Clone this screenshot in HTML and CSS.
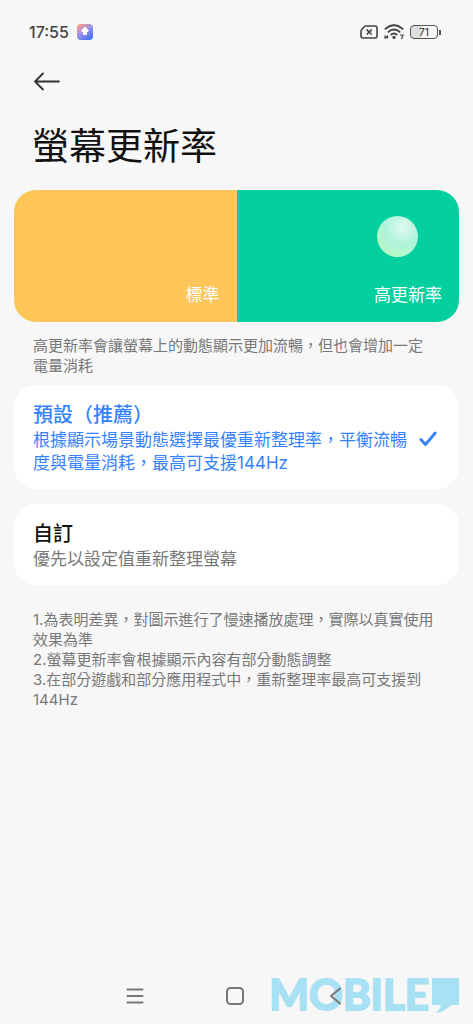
FILE: index.html
```html
<!DOCTYPE html>
<html lang="zh-Hant">
<head>
<meta charset="utf-8">
<meta name="viewport" content="width=device-width, initial-scale=1">
<title>螢幕更新率</title>
<link rel="stylesheet" href="styles.css">
</head>
<body>
<div class="screen">
  <header class="status">
    <div class="status-group">
      <time>17:55</time>
      <svg class="app-icon" width="16" height="16" viewBox="0 0 16 16" aria-hidden="true">
        <defs>
          <linearGradient id="app" x1="0.1" y1="0" x2="0.8" y2="1">
            <stop offset="0" stop-color="#ff9a76"/>
            <stop offset="0.45" stop-color="#a493e8"/>
            <stop offset="1" stop-color="#3f6dfa"/>
          </linearGradient>
        </defs>
        <rect width="16" height="16" rx="4" fill="url(#app)"/>
        <path d="M8 3 11.500 6.500 9.500 8.500V10.500H6.500V8.500L4.500 6.500Z" fill="#fff" stroke="#fff" stroke-linejoin="round" stroke-width="1"/>
      </svg>
    </div>
    <div class="status-group status-right">
      <svg width="18" height="14" viewBox="0 0 18 14" fill="none" stroke="#444" stroke-width="1.6" aria-hidden="true">
        <path d="M5.6 1H15a2 2 0 0 1 2 2v8a2 2 0 0 1-2 2H3a2 2 0 0 1-2-2V6.2Q1 5.4 1.6 4.8L4.4 1.6Q4.9 1 5.6 1Z"/>
        <path d="m6.7 4.7 5 4.8m0-4.8-5 4.8" stroke-width="1.7"/>
      </svg>
      <svg width="20" height="16" viewBox="0 0 20 16" fill="none" stroke="#444" stroke-width="1.8" aria-hidden="true">
        <path d="M.8 5.4Q10-2.800 19.200 5.400M3.800 8.300Q10 2.800 16.200 8.300M6.700 11Q10 8 13.300 11"/>
        <circle cx="10" cy="13.300" r="1.600" fill="#444" stroke="none"/>
        <path d="M1 14.500V11.500M3.500 11.500v3M1 14.500l3-3M16 11h3l-1.500 4" stroke-width="1.200"/>
      </svg>
      <span class="battery"><span class="battery-body">71</span></span>
    </div>
  </header>

  <div class="toolbar">
    <button class="icon-button" type="button" aria-label="返回">
      <svg width="28" height="20" viewBox="0 0 28 20" fill="none" stroke="#333" stroke-width="1.800" stroke-linecap="round" stroke-linejoin="round" aria-hidden="true">
        <path d="M26 10.500H2M10 2.500 2 10.500l8 8"/>
      </svg>
    </button>
  </div>

  <main>
    <h1 class="title">螢幕更新率</h1>
    <section class="demo">
      <div class="demo-half demo-standard"><span>標準</span></div>
      <div class="demo-half demo-high"><i class="ball"></i><span>高更新率</span></div>
    </section>
    <p class="note">高更新率會讓螢幕上的動態顯示更加流暢，但也會增加一定電量消耗</p>

    <form class="options">
      <label class="option">
        <input class="option-input" type="radio" name="rate" checked>
        <span class="option-text">
          <span class="option-title">預設（推薦）</span>
          <span class="option-desc">根據顯示場景動態選擇最優重新整理率，平衡流暢度與電量消耗，最高可支援144Hz</span>
        </span>
        <svg class="check" width="18" height="16" viewBox="0 0 18 16" fill="none" stroke="currentColor" stroke-width="2.800" stroke-linecap="round" stroke-linejoin="round" aria-hidden="true">
          <path d="m1.800 8.500 4.700 5L16.200 2"/>
        </svg>
      </label>
      <label class="option">
        <input class="option-input" type="radio" name="rate">
        <span class="option-text">
          <span class="option-title">自訂</span>
          <span class="option-desc">優先以設定值重新整理螢幕</span>
        </span>
      </label>
    </form>

    <div class="note footnotes">
      <p>1.為表明差異，對圖示進行了慢速播放處理，實際以真實使用效果為準</p>
      <p>2.螢幕更新率會根據顯示內容有部分動態調整</p>
      <p>3.在部分遊戲和部分應用程式中，重新整理率最高可支援到144Hz</p>
    </div>
  </main>

  <nav class="nav">
    <div class="watermark">
      <span>MOBILE</span>
      <svg width="27" height="35" viewBox="0 0 27 35" fill="#a8e0f4" aria-hidden="true">
        <path d="M0 0h27v27h-8Q13 34 3 35 8 32 9 27H0Z"/>
      </svg>
    </div>
    <button class="icon-button" type="button" aria-label="最近">
      <svg width="20" height="20" viewBox="0 0 20 20" fill="none" stroke="#777" stroke-width="2" stroke-linecap="round" aria-hidden="true"><path d="M2.500 3.500h15M2.500 10h15M2.500 16.500h15"/></svg>
    </button>
    <button class="icon-button" type="button" aria-label="主畫面">
      <svg width="20" height="20" viewBox="0 0 20 20" fill="none" stroke="#777" stroke-width="2" aria-hidden="true"><rect x="2" y="2" width="16" height="16" rx="3.500"/></svg>
    </button>
    <button class="icon-button" type="button" aria-label="返回上一頁">
      <svg width="20" height="20" viewBox="0 0 20 20" fill="none" stroke="#777" stroke-width="2" stroke-linecap="round" stroke-linejoin="round" aria-hidden="true"><path d="M15 2.500 6 10l9 7.500"/></svg>
    </button>
  </nav>
</div>
</body>
</html>
```
FILE: styles.css
```css
* {
  box-sizing: border-box;
}

body {
  margin: 0;
  background: #f7f7f7;
  color: #111;
  font-family: Inter, "Noto Sans CJK TC", sans-serif;
}

h1,
p {
  margin: 0;
}

.screen {
  display: flex;
  flex-direction: column;
  min-height: 100vh;
  padding: 0 14px;
}

.status {
  display: flex;
  justify-content: space-between;
  align-items: center;
  height: 64px;
  padding: 0 18px 0 15px;
  color: #444;
  font-size: 16px;
  font-weight: 500;
}

.status-group {
  display: flex;
  align-items: center;
  gap: 8px;
}

.status-right {
  gap: 6px;
}

.battery {
  display: flex;
  align-items: center;
  gap: 1px;
}

.battery::after {
  content: "";
  width: 2px;
  height: 5px;
  background: #555;
}

.battery-body {
  width: 28px;
  height: 14px;
  border: 1px solid #555;
  border-radius: 4px;
  background: linear-gradient(90deg, #ddd 40%, transparent 40%);
  font-size: 10px;
  line-height: 12px;
  text-align: center;
}

.icon-button {
  display: flex;
  padding: 0;
  border: 0;
  background: none;
}

.toolbar {
  display: flex;
  align-items: center;
  height: 34px;
  padding: 0 19px;
}

.title {
  margin: 22px 18px 16px;
  font-size: 37px;
  font-weight: 400;
  line-height: 54px;
}

.demo {
  display: flex;
  height: 132px;
  border-radius: 22px;
  overflow: hidden;
  color: #fff;
  font-size: 17px;
  line-height: 24px;
}

.demo-half {
  display: flex;
  flex: 1;
  flex-direction: column;
  align-items: flex-end;
  justify-content: flex-end;
  padding: 26px 17px 15px;
}

.demo-standard {
  background: #fec658;
}

.demo-high {
  justify-content: space-between;
  background: #03cf9f;
}

.ball {
  width: 41px;
  height: 41px;
  margin-right: 24px;
  border-radius: 50%;
  background: radial-gradient(circle at 62% 28%, #dffaf0, #aef3da 45%, #b9f9c4 80%);
}

.note {
  padding: 0 22px 0 19px;
  margin-top: 14px;
  color: #777;
  font-size: 15px;
  line-height: 20px;
}

.options {
  display: grid;
  gap: 15px;
  margin-top: 9px;
}

.option {
  display: flex;
  align-items: center;
  gap: 10px;
  padding: 17px 22px 14px 19px;
  border-radius: 22px;
  background: #fff;
}

.option-input {
  position: absolute;
  opacity: 0;
}

.option-text {
  flex: 1;
}

.option-title,
.option-desc {
  display: block;
}

.option-title {
  font-size: 20px;
  font-weight: 500;
  line-height: 27px;
}

.option-desc {
  color: #777;
  font-size: 17px;
  line-height: 23px;
}

.option-input:checked ~ .option-text,
.option-input:checked ~ .option-text .option-desc {
  color: #3482ff;
}

.check {
  color: #3482ff;
}

.footnotes {
  margin-top: 25px;
}

.nav {
  position: relative;
  display: flex;
  align-items: center;
  justify-content: center;
  gap: 80px;
  height: 56px;
  margin-top: auto;
  padding-right: 4px;
}

.nav .icon-button {
  position: relative;
}

.watermark {
  position: absolute;
  right: 0;
  bottom: 11px;
  display: flex;
  align-items: flex-end;
  gap: 3px;
  color: #a8e0f4;
  font-family: Lato, sans-serif;
  font-size: 42px;
  font-weight: 700;
  line-height: 38px;
  -webkit-text-stroke: 2px #a8e0f4;
}
```
